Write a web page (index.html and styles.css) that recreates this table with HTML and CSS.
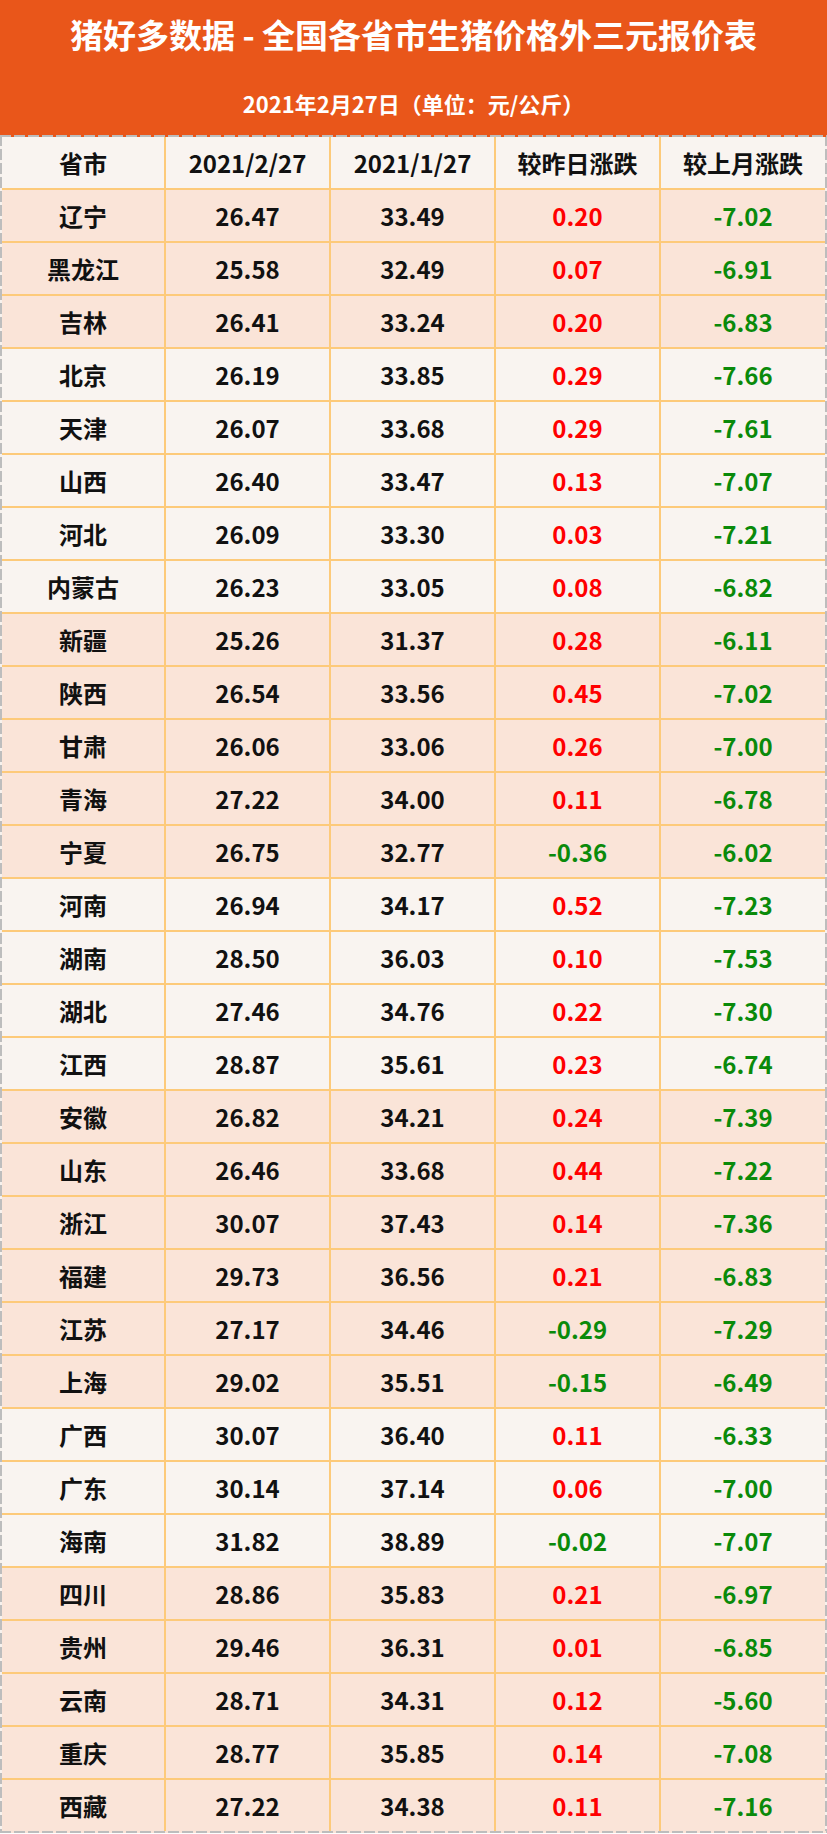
FILE: index.html
```html
<!DOCTYPE html>
<html lang="zh">
<head>
<meta charset="utf-8">
<title>猪好多数据 - 全国各省市生猪价格外三元报价表</title>
<link rel="stylesheet" href="styles.css">
</head>
<body>
<div class="page">
  <header class="banner">
    <h1 class="title">猪好多数据 - 全国各省市生猪价格外三元报价表</h1>
    <p class="subtitle">2021年2月27日（单位：元/公斤）</p>
  </header>
  <div class="table">
    <div class="row head"><span>省市</span><span>2021/2/27</span><span>2021/1/27</span><span>较昨日涨跌</span><span>较上月涨跌</span></div>
    <div class="row peach"><span>辽宁</span><span>26.47</span><span>33.49</span><span class="up">0.20</span><span class="down">-7.02</span></div>
    <div class="row peach"><span>黑龙江</span><span>25.58</span><span>32.49</span><span class="up">0.07</span><span class="down">-6.91</span></div>
    <div class="row peach"><span>吉林</span><span>26.41</span><span>33.24</span><span class="up">0.20</span><span class="down">-6.83</span></div>
    <div class="row light"><span>北京</span><span>26.19</span><span>33.85</span><span class="up">0.29</span><span class="down">-7.66</span></div>
    <div class="row light"><span>天津</span><span>26.07</span><span>33.68</span><span class="up">0.29</span><span class="down">-7.61</span></div>
    <div class="row light"><span>山西</span><span>26.40</span><span>33.47</span><span class="up">0.13</span><span class="down">-7.07</span></div>
    <div class="row light"><span>河北</span><span>26.09</span><span>33.30</span><span class="up">0.03</span><span class="down">-7.21</span></div>
    <div class="row light"><span>内蒙古</span><span>26.23</span><span>33.05</span><span class="up">0.08</span><span class="down">-6.82</span></div>
    <div class="row peach"><span>新疆</span><span>25.26</span><span>31.37</span><span class="up">0.28</span><span class="down">-6.11</span></div>
    <div class="row peach"><span>陕西</span><span>26.54</span><span>33.56</span><span class="up">0.45</span><span class="down">-7.02</span></div>
    <div class="row peach"><span>甘肃</span><span>26.06</span><span>33.06</span><span class="up">0.26</span><span class="down">-7.00</span></div>
    <div class="row peach"><span>青海</span><span>27.22</span><span>34.00</span><span class="up">0.11</span><span class="down">-6.78</span></div>
    <div class="row peach"><span>宁夏</span><span>26.75</span><span>32.77</span><span class="down">-0.36</span><span class="down">-6.02</span></div>
    <div class="row light"><span>河南</span><span>26.94</span><span>34.17</span><span class="up">0.52</span><span class="down">-7.23</span></div>
    <div class="row light"><span>湖南</span><span>28.50</span><span>36.03</span><span class="up">0.10</span><span class="down">-7.53</span></div>
    <div class="row light"><span>湖北</span><span>27.46</span><span>34.76</span><span class="up">0.22</span><span class="down">-7.30</span></div>
    <div class="row light"><span>江西</span><span>28.87</span><span>35.61</span><span class="up">0.23</span><span class="down">-6.74</span></div>
    <div class="row peach"><span>安徽</span><span>26.82</span><span>34.21</span><span class="up">0.24</span><span class="down">-7.39</span></div>
    <div class="row peach"><span>山东</span><span>26.46</span><span>33.68</span><span class="up">0.44</span><span class="down">-7.22</span></div>
    <div class="row peach"><span>浙江</span><span>30.07</span><span>37.43</span><span class="up">0.14</span><span class="down">-7.36</span></div>
    <div class="row peach"><span>福建</span><span>29.73</span><span>36.56</span><span class="up">0.21</span><span class="down">-6.83</span></div>
    <div class="row peach"><span>江苏</span><span>27.17</span><span>34.46</span><span class="down">-0.29</span><span class="down">-7.29</span></div>
    <div class="row peach"><span>上海</span><span>29.02</span><span>35.51</span><span class="down">-0.15</span><span class="down">-6.49</span></div>
    <div class="row light"><span>广西</span><span>30.07</span><span>36.40</span><span class="up">0.11</span><span class="down">-6.33</span></div>
    <div class="row light"><span>广东</span><span>30.14</span><span>37.14</span><span class="up">0.06</span><span class="down">-7.00</span></div>
    <div class="row light"><span>海南</span><span>31.82</span><span>38.89</span><span class="down">-0.02</span><span class="down">-7.07</span></div>
    <div class="row peach"><span>四川</span><span>28.86</span><span>35.83</span><span class="up">0.21</span><span class="down">-6.97</span></div>
    <div class="row peach"><span>贵州</span><span>29.46</span><span>36.31</span><span class="up">0.01</span><span class="down">-6.85</span></div>
    <div class="row peach"><span>云南</span><span>28.71</span><span>34.31</span><span class="up">0.12</span><span class="down">-5.60</span></div>
    <div class="row peach"><span>重庆</span><span>28.77</span><span>35.85</span><span class="up">0.14</span><span class="down">-7.08</span></div>
    <div class="row peach last"><span>西藏</span><span>27.22</span><span>34.38</span><span class="up">0.11</span><span class="down">-7.16</span></div>
  </div>
</div>
</body>
</html>
```

FILE: styles.css
```css
* { box-sizing: border-box; }

html, body {
  margin: 0;
  padding: 0;
  background: #ffffff;
}

body {
  font-family: "Noto Sans CJK SC", "Noto Sans", sans-serif;
  font-weight: 700;
  color: #111111;
}

.page {
  width: 827px;
}

.banner {
  background: #e9561a;
  height: 135px;
  color: #ffffff;
  text-align: center;
  padding-top: 8px;
}

.title {
  margin: 0;
  font-size: 33px;
  line-height: 52px;
  font-weight: 700;
  letter-spacing: 0;
}

.subtitle {
  margin: 29px 0 0;
  font-size: 22px;
  line-height: 28px;
  font-weight: 700;
}

.table {
  padding: 2px;
  background:
    repeating-linear-gradient(90deg, #bdbdbd 0 11px, #e9561a 11px 14px) left top / 100% 2px no-repeat,
    repeating-linear-gradient(90deg, #bdbdbd 0 11px, #fae4d8 11px 14px) left bottom / 100% 2px no-repeat,
    repeating-linear-gradient(180deg, #bdbdbd 0 11px, #f7f2ee 11px 14px) left top / 2px 100% no-repeat,
    repeating-linear-gradient(180deg, #bdbdbd 0 11px, #f7f2ee 11px 14px) right top / 2px 100% no-repeat;
}

.row {
  display: grid;
  grid-template-columns: 164px 165px 165px 165px 1fr;
  height: 53px;
  border-bottom: 2px solid #fdca7a;
}

.row.last {
  border-bottom: none;
  height: 51px;
}

.row.head,
.row.light {
  background: #f9f4f0;
}

.row.peach {
  background: #fae4d8;
}

.row span {
  display: flex;
  align-items: center;
  justify-content: center;
  font-size: 24px;
  line-height: 1;
  border-right: 2px solid #fdca7a;
}

.row span:last-child {
  border-right: none;
}

.up {
  color: #ff0000;
}

.down {
  color: #0a8a0a;
}
```
